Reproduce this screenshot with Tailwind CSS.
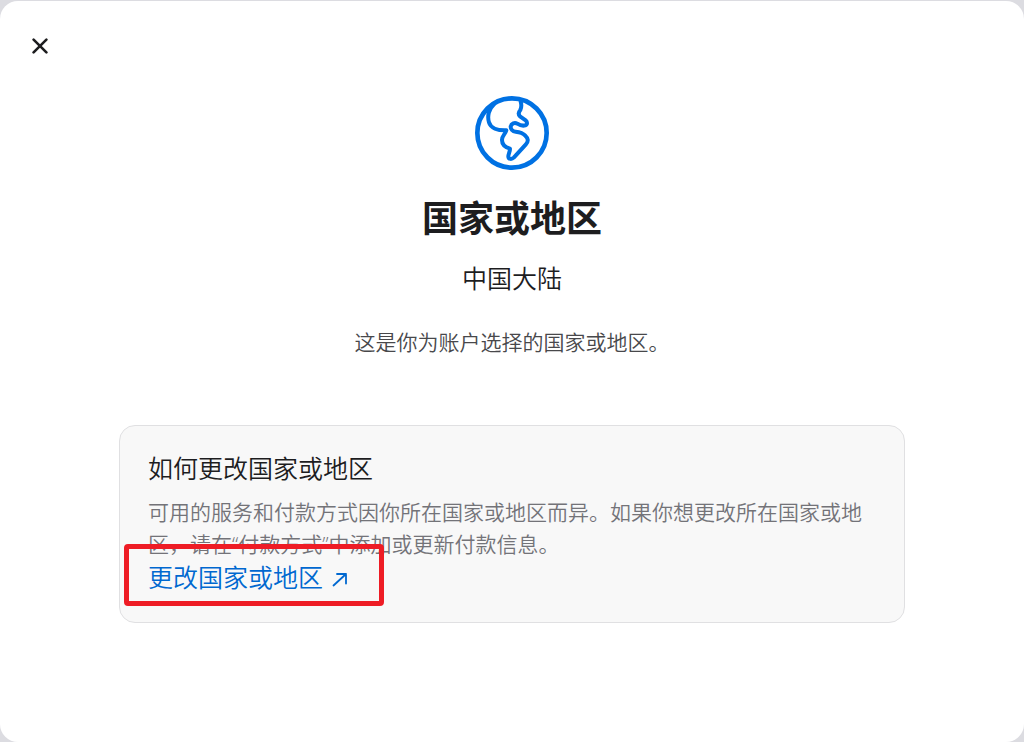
<!DOCTYPE html>
<html lang="zh-CN">
<head>
	<meta charset="UTF-8">
	<meta name="viewport" content="width=device-width, initial-scale=1.0">
	<title>国家或地区</title>
	<script src="https://cdn.jsdelivr.net/npm/@tailwindcss/browser@4"></script>
</head>
<body class="bg-[#dcdce1] font-['Open_Sans','Noto_Sans_CJK_SC',sans-serif] font-[350] text-[#1d1d1f]">

	<div class="flex min-h-screen flex-col pt-px">
		<main class="grow rounded-[18px] bg-white px-7 pt-[33px] pb-12">

			<button type="button" aria-label="关闭" class="flex size-6 items-center justify-center cursor-pointer">
				<svg class="size-4" viewBox="0 0 16 16" fill="none" stroke="currentColor" stroke-width="2.6" stroke-linecap="round">
					<path d="M1.6 1.6 14.4 14.4M14.4 1.6 1.6 14.4"/>
				</svg>
			</button>

			<header class="mt-[30px] flex flex-col items-center text-center">
				<svg class="size-[90px]" viewBox="0 0 270 270" fill="none" stroke="#0071e3" stroke-linecap="round" stroke-linejoin="round" aria-hidden="true">
					<circle cx="135" cy="135" r="104" stroke-width="14"/>
					<path stroke-width="12" d="M80 50C66 62 60 84 66 103C71 120 92 128 118 127C115 139 105 142 105 156C105 171 115 178 129 182C129 192 124 197 124 206C125 214 134 215 141 208L176 170C185 160 184 151 175 143C167 134 157 132 146 131C136 130 131 123 131 116C133 106 143 103 151 107C159 112 168 114 175 112C182 109 181 101 176 97L159 85C153 79 155 72 160 66C163 60 165 54 161 40"/>
				</svg>
				<h1 class="mt-4 text-4xl leading-[50px] font-bold">国家或地区</h1>
				<p class="mt-[18px] text-[25px] leading-8">中国大陆</p>
				<p class="mt-8 text-[21px] leading-8 text-[#48484b]">这是你为账户选择的国家或地区。</p>
			</header>

			<section class="mx-auto mt-[67px] max-w-[786px] rounded-2xl border border-[#e0e0e2] bg-[#f8f8f8] px-7 pt-[26px] pb-7">
				<h2 class="text-[25px] leading-8">如何更改国家或地区</h2>
				<p class="mt-3 text-[21px] leading-8 text-[#737378]">可用的服务和付款方式因你所在国家或地区而异。如果你想更改所在国家或地区，请在“付款方式”中添加或更新付款信息。</p>
				<div class="relative w-fit">
					<a href="#" class="flex items-center gap-[9px] text-[25px] leading-[34px] text-[#0068d0]">
						更改国家或地区
						<svg class="mt-1 size-4" viewBox="0 0 16 16" fill="none" stroke="currentColor" stroke-width="1.8" stroke-linecap="round" stroke-linejoin="round" aria-hidden="true">
							<path d="M1.5 14.5 14 3M5 3h9v9.5"/>
						</svg>
					</a>
					<!-- highlight frame around the link -->
					<div class="pointer-events-none absolute -top-4 -right-9 -bottom-3 -left-6 rounded-sm border-[5px] border-[#ee1c25]"></div>
				</div>
			</section>

		</main>
	</div>

</body>
</html>
